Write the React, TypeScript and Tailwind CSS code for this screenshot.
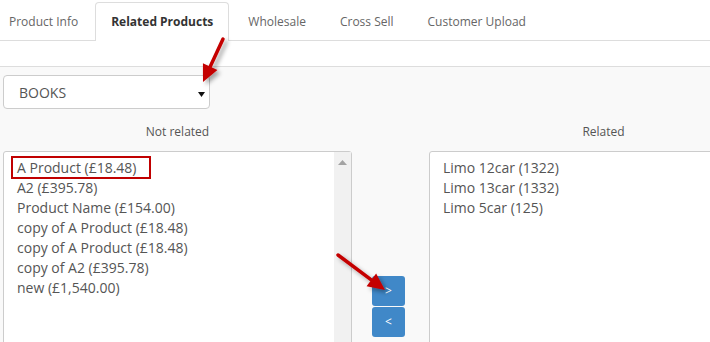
import React from "react";

const tabs = ["Product Info", "Related Products", "Wholesale", "Cross Sell", "Customer Upload"];
const notRelated = [
  "A Product (£18.48)",
  "A2 (£395.78)",
  "Product Name (£154.00)",
  "copy of A Product (£18.48)",
  "copy of A Product (£18.48)",
  "copy of A2 (£395.78)",
  "new (£1,540.00)",
];
const related = ["Limo 12car (1322)", "Limo 13car (1332)", "Limo 5car (125)"];

function Arrow({ x1, y1, x2, y2 }: { x1: number; y1: number; x2: number; y2: number }) {
  const dx = x2 - x1;
  const dy = y2 - y1;
  const len = Math.hypot(dx, dy);
  const ux = dx / len;
  const uy = dy / len;
  const hl = 17;
  const hw = 8;
  const bx = x2 - ux * hl;
  const by = y2 - uy * hl;
  const px = -uy * hw;
  const py = ux * hw;
  return (
    <g filter="url(#shadow)">
      <line x1={x1} y1={y1} x2={bx + ux * 2} y2={by + uy * 2} stroke="#c40000" strokeWidth={3.5} strokeLinecap="round" />
      <polygon points={`${x2},${y2} ${bx + px},${by + py} ${bx - px},${by - py}`} fill="#c40000" />
    </g>
  );
}

export default function App() {
  return (
    <div className="relative w-[710px] h-[342px] overflow-hidden bg-[#f9f9f9] font-['Open_Sans','Liberation_Sans',sans-serif]">
      {/* Tabs */}
      <div className="h-[41px] bg-white border-b border-[#dddddd] flex items-end gap-[4px]">
        {tabs.map((t, i) => {
          const active = i === 1;
          return (
            <div
              key={t}
              className={
                active
                  ? "h-[39px] mb-[-1px] ml-[-2px] flex items-center px-[15px] bg-white border border-b-0 border-[#dddddd] rounded-t-[4px] text-[12px] font-bold text-[#333333]"
                  : i === 0
                  ? "h-[39px] mb-[-1px] flex items-center pl-[9px] pr-[15px] text-[12px] text-[#666666]"
                  : "h-[39px] mb-[-1px] flex items-center px-[15px] text-[12px] text-[#666666]"
              }
            >
              {t}
            </div>
          );
        })}
      </div>
      <div className="h-[26px] bg-white border-b border-[#dddddd]" />

      {/* Content */}
      <div className="px-[3px] pt-[8px]">
        <div className="w-[207px] h-[34px] bg-white border border-[#cccccc] rounded-[4px] flex items-center justify-between pl-[15px] pr-[4px]">
          <span className="text-[14px] text-[#555555]">BOOKS</span>
          <svg width="7" height="5" viewBox="0 0 7 5" className="mt-[4px]">
            <polygon points="0,0 7,0 3.5,5" fill="#111111" />
          </svg>
        </div>

        <div className="flex mt-[14px] text-[12px] text-[#555555] leading-[18px]">
          <div className="w-[349px] shrink-0 text-center">Not related</div>
          <div className="w-[77px] shrink-0" />
          <div className="w-[349px] shrink-0 text-center">Related</div>
        </div>

        <div className="flex mt-[10px]">
          <div className="w-[349px] h-[240px] shrink-0 bg-white border border-[#cccccc] rounded-[3px] flex">
            <div className="flex-1 pl-[13px] pt-[6px] text-[14px] leading-[20px] text-[#555555]">
              {notRelated.map((n, i) => (
                <div key={i} className="relative">
                  {n}
                  {i === 0 && (
                    <span className="absolute left-[-6px] top-[-2px] w-[140px] h-[23px] border-2 border-[#c00000]" />
                  )}
                </div>
              ))}
            </div>
            <div className="w-[17px] bg-[#f1f1f1] flex justify-center pt-[8px]">
              <svg width="9" height="5" viewBox="0 0 9 5">
                <polygon points="4.5,0 9,5 0,5" fill="#a3a3a3" />
              </svg>
            </div>
          </div>

          <div className="w-[77px] shrink-0 flex flex-col items-start pl-[20px] pt-[125px] gap-[1px]">
            <button className="w-[33px] h-[30px] rounded-[3px] bg-[#4088c8] text-white text-[12px] flex items-center justify-center">
              &gt;
            </button>
            <button className="w-[33px] h-[30px] rounded-[3px] bg-[#4088c8] text-white text-[12px] flex items-center justify-center">
              &lt;
            </button>
          </div>

          <div className="w-[349px] h-[240px] shrink-0 bg-white border border-[#cccccc] rounded-[3px] pl-[13px] pt-[6px] text-[14px] leading-[20px] text-[#555555]">
            {related.map((r) => (
              <div key={r}>{r}</div>
            ))}
          </div>
        </div>
      </div>

      {/* Annotation arrows */}
      <svg className="absolute inset-0 pointer-events-none" width="710" height="342">
        <defs>
          <filter id="shadow" x="-50%" y="-50%" width="200%" height="200%">
            <feDropShadow dx="3" dy="3" stdDeviation="2" floodColor="#000000" floodOpacity="0.35" />
          </filter>
        </defs>
        <Arrow x1={223} y1={39} x2={203} y2={82} />
        <Arrow x1={338} y1={255} x2={385} y2={290} />
      </svg>
    </div>
  );
}
